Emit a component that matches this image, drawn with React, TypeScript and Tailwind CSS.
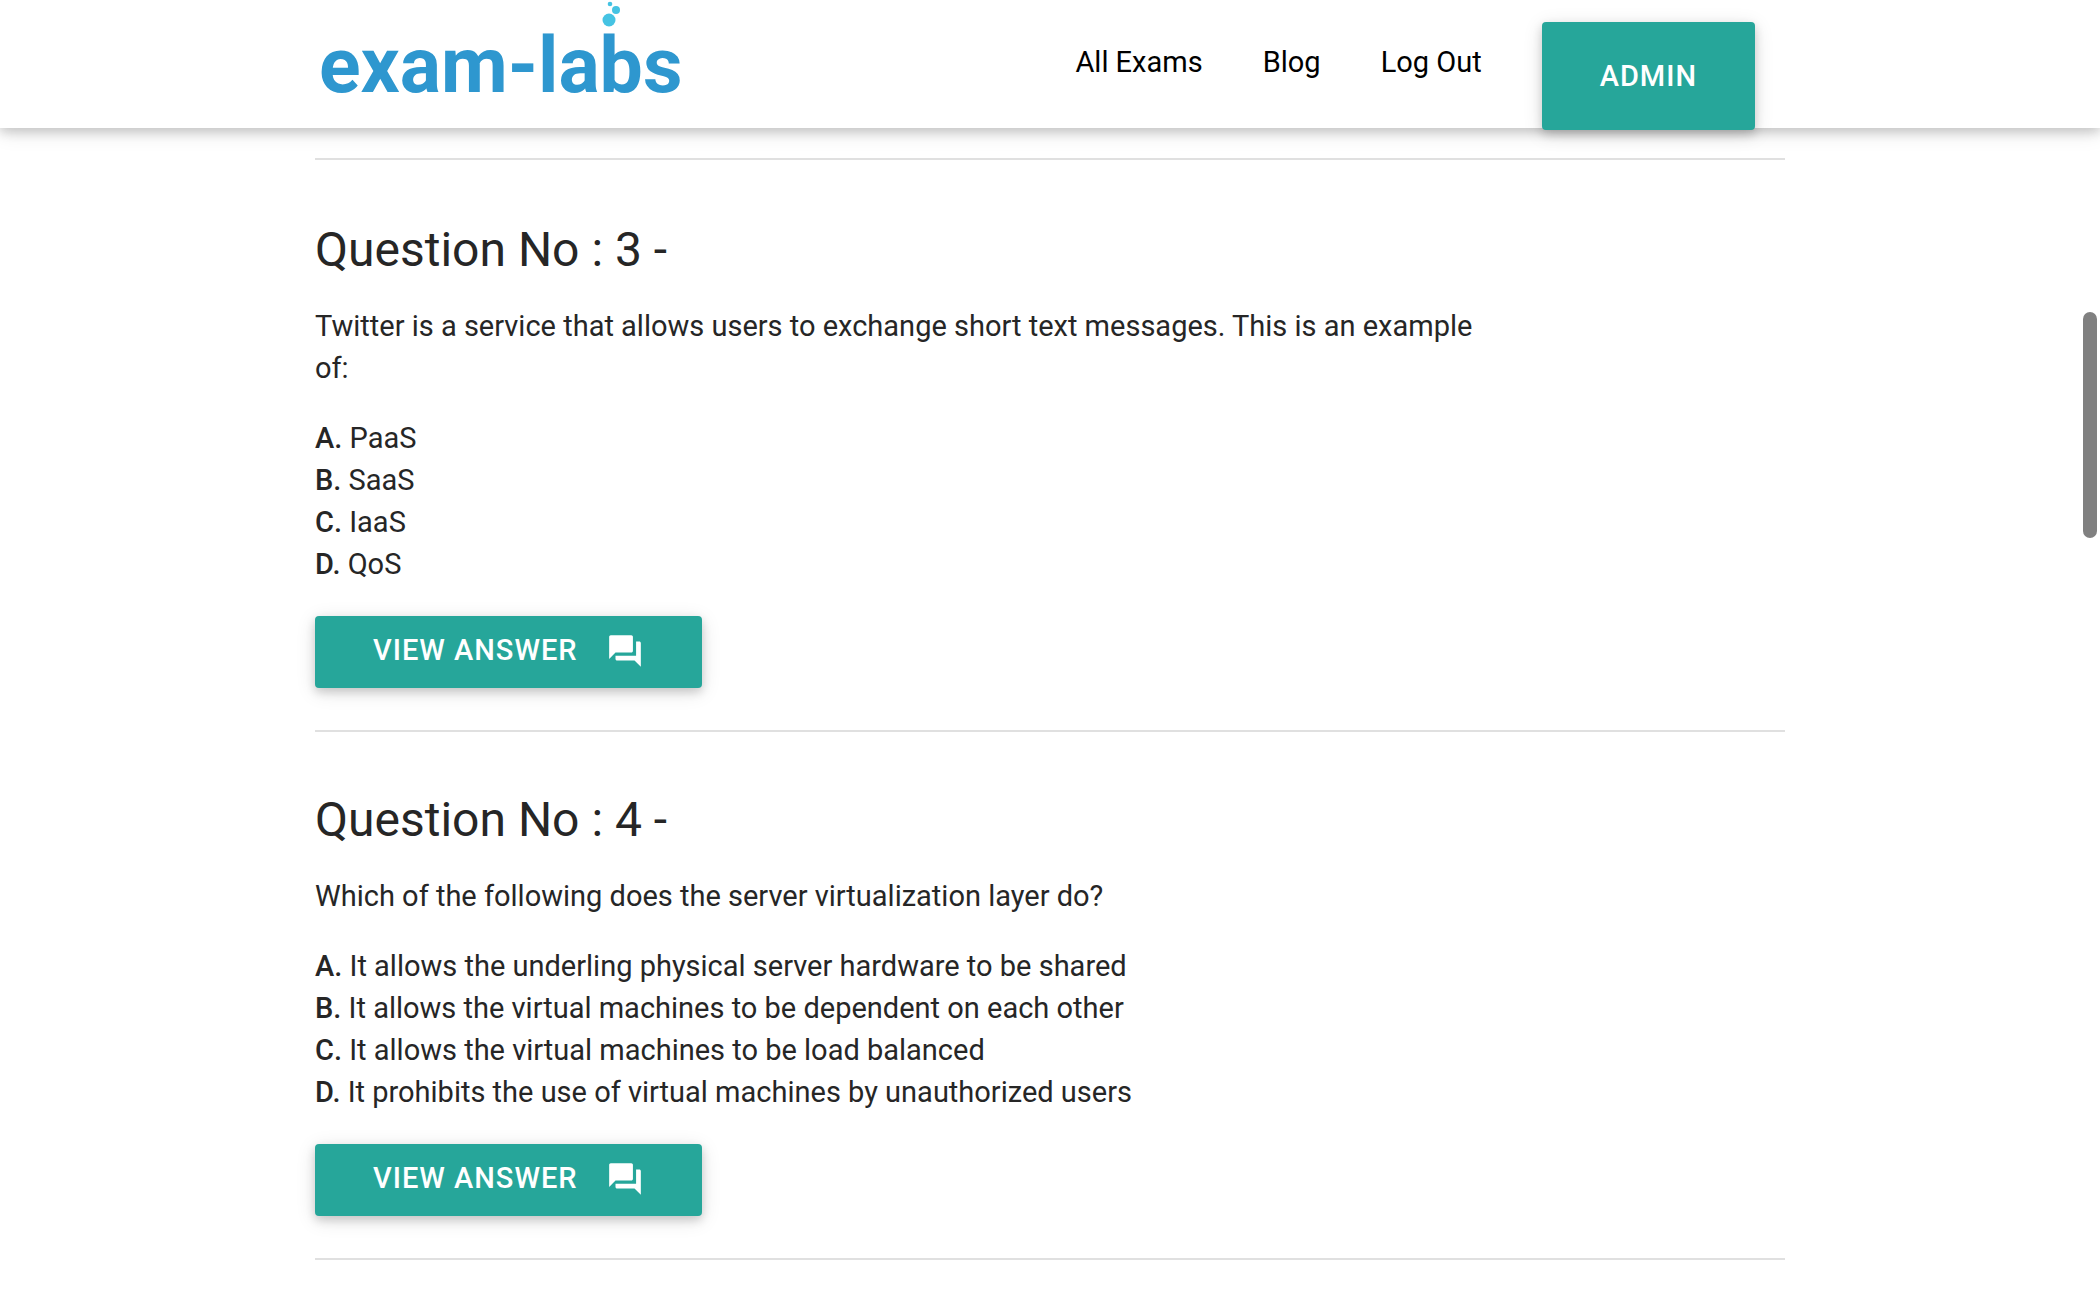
import React from "react";

interface Question {
  no: number;
  text: string;
  options: string[];
}

const QUESTIONS: Question[] = [
  {
    no: 3,
    text: "Twitter is a service that allows users to exchange short text messages. This is an example of:",
    options: ["PaaS", "SaaS", "IaaS", "QoS"],
  },
  {
    no: 4,
    text: "Which of the following does the server virtualization layer do?",
    options: [
      "It allows the underling physical server hardware to be shared",
      "It allows the virtual machines to be dependent on each other",
      "It allows the virtual machines to be load balanced",
      "It prohibits the use of virtual machines by unauthorized users",
    ],
  },
];

const NAV_LINKS = ["All Exams", "Blog", "Log Out"];

const Logo: React.FC = () => (
  <a
    href="#"
    className="relative ml-1 font-['Roboto',sans-serif] text-[77px] leading-[132px] font-bold text-[#2e97cf]"
  >
    exam-labs
    {/* bubbles above the "b" */}
    <svg
      className="absolute top-0 left-[282px]"
      width="22"
      height="28"
      viewBox="0 0 22 28"
      fill="#45c3e3"
      aria-hidden="true"
    >
      <circle cx="9" cy="4" r="2.3" />
      <circle cx="15" cy="10" r="4" />
      <circle cx="8" cy="20" r="6.5" />
    </svg>
  </a>
);

const Header: React.FC = () => (
  <header className="relative z-10 h-32 bg-white shadow-[0_4px_10px_0_rgba(0,0,0,0.16),0_4px_20px_0_rgba(0,0,0,0.12)]">
    <div className="mx-auto flex w-[70%] items-start justify-between">
      <Logo />
      <nav className="flex items-start">
        {NAV_LINKS.map((label) => (
          <a key={label} href="#" className="px-[30px] text-[29px] leading-[124px] text-black">
            {label}
          </a>
        ))}
        <button
          type="button"
          className="mx-[30px] mt-[22px] h-[108px] rounded-[4px] bg-[#26a69a] px-[58px] text-[29px] leading-[108px] font-medium tracking-[1px] text-white uppercase shadow-[0_4px_10px_0_rgba(0,0,0,0.16),0_4px_20px_0_rgba(0,0,0,0.12)]"
        >
          Admin
        </button>
      </nav>
    </div>
  </header>
);

const QuestionBlock: React.FC<{ question: Question }> = ({ question }) => (
  <section className="border-b-2 border-[#e0e0e0] pb-[42px]">
    <h2 className="pt-[60px] text-[48px] leading-[56px]">Question No : {question.no} -</h2>
    <p className="mt-[27px] w-4/5 text-[29px] leading-[42px]">{question.text}</p>
    <ol className="mt-7 text-[29px] leading-[42px]">
      {question.options.map((option, i) => (
        <li key={option}>
          <b className="font-medium">{"ABCD"[i]}.</b> {option}
        </li>
      ))}
    </ol>
    <button
      type="button"
      className="mt-[31px] flex h-[72px] items-start rounded-[4px] bg-[#26a69a] px-[58px] text-[29px] leading-[68px] font-medium tracking-[1px] text-white uppercase shadow-[0_4px_10px_0_rgba(0,0,0,0.16),0_4px_20px_0_rgba(0,0,0,0.12)]"
    >
      View Answer
      <svg className="mt-4 ml-7 size-[38px]" viewBox="0 0 24 24" fill="currentColor" aria-hidden="true">
        <path d="M21 6h-2v9H6v2c0 .55.45 1 1 1h11l4 4V7c0-.55-.45-1-1-1zm-4 6V3c0-.55-.45-1-1-1H3c-.55 0-1 .45-1 1v14l4-4h10c.55 0 1-.45 1-1z" />
      </svg>
    </button>
  </section>
);

export default function App() {
  return (
    <div className="h-screen overflow-hidden bg-white font-['Roboto',sans-serif] text-[#262626]">
      <Header />
      <main className="mx-auto mt-[30px] w-[70%] border-t-2 border-[#e0e0e0] pt-0.5">
        {QUESTIONS.map((question) => (
          <QuestionBlock key={question.no} question={question} />
        ))}
      </main>
      {/* overlay scroll thumb */}
      <div className="fixed top-[312px] right-[3px] h-[226px] w-[14px] rounded-full bg-[#808080]" />
    </div>
  );
}
